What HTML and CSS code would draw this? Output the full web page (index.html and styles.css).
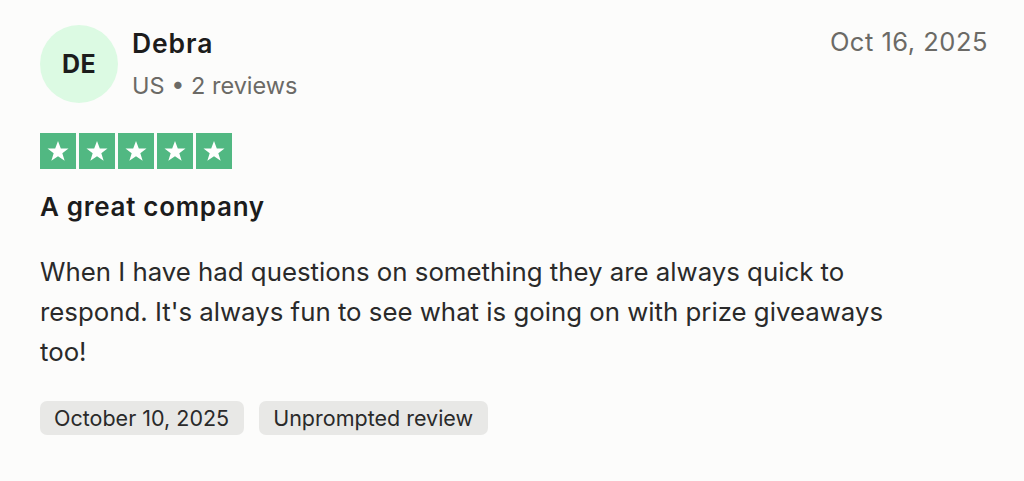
FILE: index.html
```html
<!DOCTYPE html>
<html>
<head>
<meta charset="utf-8">
<link rel="stylesheet" href="styles.css">
</head>
<body>
<article class="review">
  <header class="head">
    <div class="consumer">
      <div class="avatar">DE</div>
      <div class="info">
        <div class="name">Debra</div>
        <div class="meta">US • 2 reviews</div>
      </div>
    </div>
    <time class="date">Oct 16, 2025</time>
  </header>
  <div class="stars">
    <span class="star"><svg viewBox="0 0 24 24"><path d="M12 3.5l2.4 6.3h6.6l-5.3 4.1 2 6.5L12 16.5l-5.7 3.9 2-6.5L3 9.8h6.6z" fill="#fff"/></svg></span>
    <span class="star"><svg viewBox="0 0 24 24"><path d="M12 3.5l2.4 6.3h6.6l-5.3 4.1 2 6.5L12 16.5l-5.7 3.9 2-6.5L3 9.8h6.6z" fill="#fff"/></svg></span>
    <span class="star"><svg viewBox="0 0 24 24"><path d="M12 3.5l2.4 6.3h6.6l-5.3 4.1 2 6.5L12 16.5l-5.7 3.9 2-6.5L3 9.8h6.6z" fill="#fff"/></svg></span>
    <span class="star"><svg viewBox="0 0 24 24"><path d="M12 3.5l2.4 6.3h6.6l-5.3 4.1 2 6.5L12 16.5l-5.7 3.9 2-6.5L3 9.8h6.6z" fill="#fff"/></svg></span>
    <span class="star"><svg viewBox="0 0 24 24"><path d="M12 3.5l2.4 6.3h6.6l-5.3 4.1 2 6.5L12 16.5l-5.7 3.9 2-6.5L3 9.8h6.6z" fill="#fff"/></svg></span>
  </div>
  <h2 class="title">A great company</h2>
  <p class="body">When I have had questions on something they are always quick to respond. It's always fun to see what is going on with prize giveaways too!</p>
  <div class="tags">
    <span class="tag">October 10, 2025</span>
    <span class="tag">Unprompted review</span>
  </div>
</article>
</body>
</html>
```
FILE: styles.css
```css
html, body { margin: 0; padding: 0; background: #fcfcfb; }
body { font-family: Inter, "Noto Sans", sans-serif; color: #2a2a2a; }
.review { padding: 25px 36px 0 40px; width: 948px; }
.head { display: flex; justify-content: space-between; align-items: flex-start; }
.consumer { display: flex; align-items: flex-start; gap: 14px; }
.avatar { width: 78px; height: 78px; border-radius: 50%; background: #dcfae3; display: flex; align-items: center; justify-content: center; font-weight: 700; font-size: 25px; color: #1c1c1c; letter-spacing: 0.3px; }
.info { display: flex; flex-direction: column; gap: 14px; margin-top: 3px; }
.name { font-size: 26.5px; line-height: 30px; font-weight: 600; letter-spacing: 0.9px; color: #1c1c1c; }
.meta { font-size: 23.5px; line-height: 28px; color: #6b6a66; }
.date { font-size: 25.5px; line-height: 30px; color: #6b6a66; margin-top: 2px; letter-spacing: 0.5px; }
.stars { display: flex; gap: 3px; margin-top: 30px; }
.star { width: 36px; height: 36px; background: #51b882; display: flex; align-items: center; justify-content: center; }
.star svg { width: 28px; height: 28px; }
.title { font-size: 26px; font-weight: 600; margin: 23px 0 0; letter-spacing: 0.7px; line-height: 30px; color: #1c1c1c; }
.body { font-size: 25.8px; line-height: 40px; margin: 30px 0 0; max-width: 880px; }
.tags { display: flex; gap: 15px; margin-top: 29px; }
.tag { background: #e8e8e6; border-radius: 7px; padding: 0 15px 0 14px; height: 34px; line-height: 34px; font-size: 21.5px; color: #2a2a2a; }
```
